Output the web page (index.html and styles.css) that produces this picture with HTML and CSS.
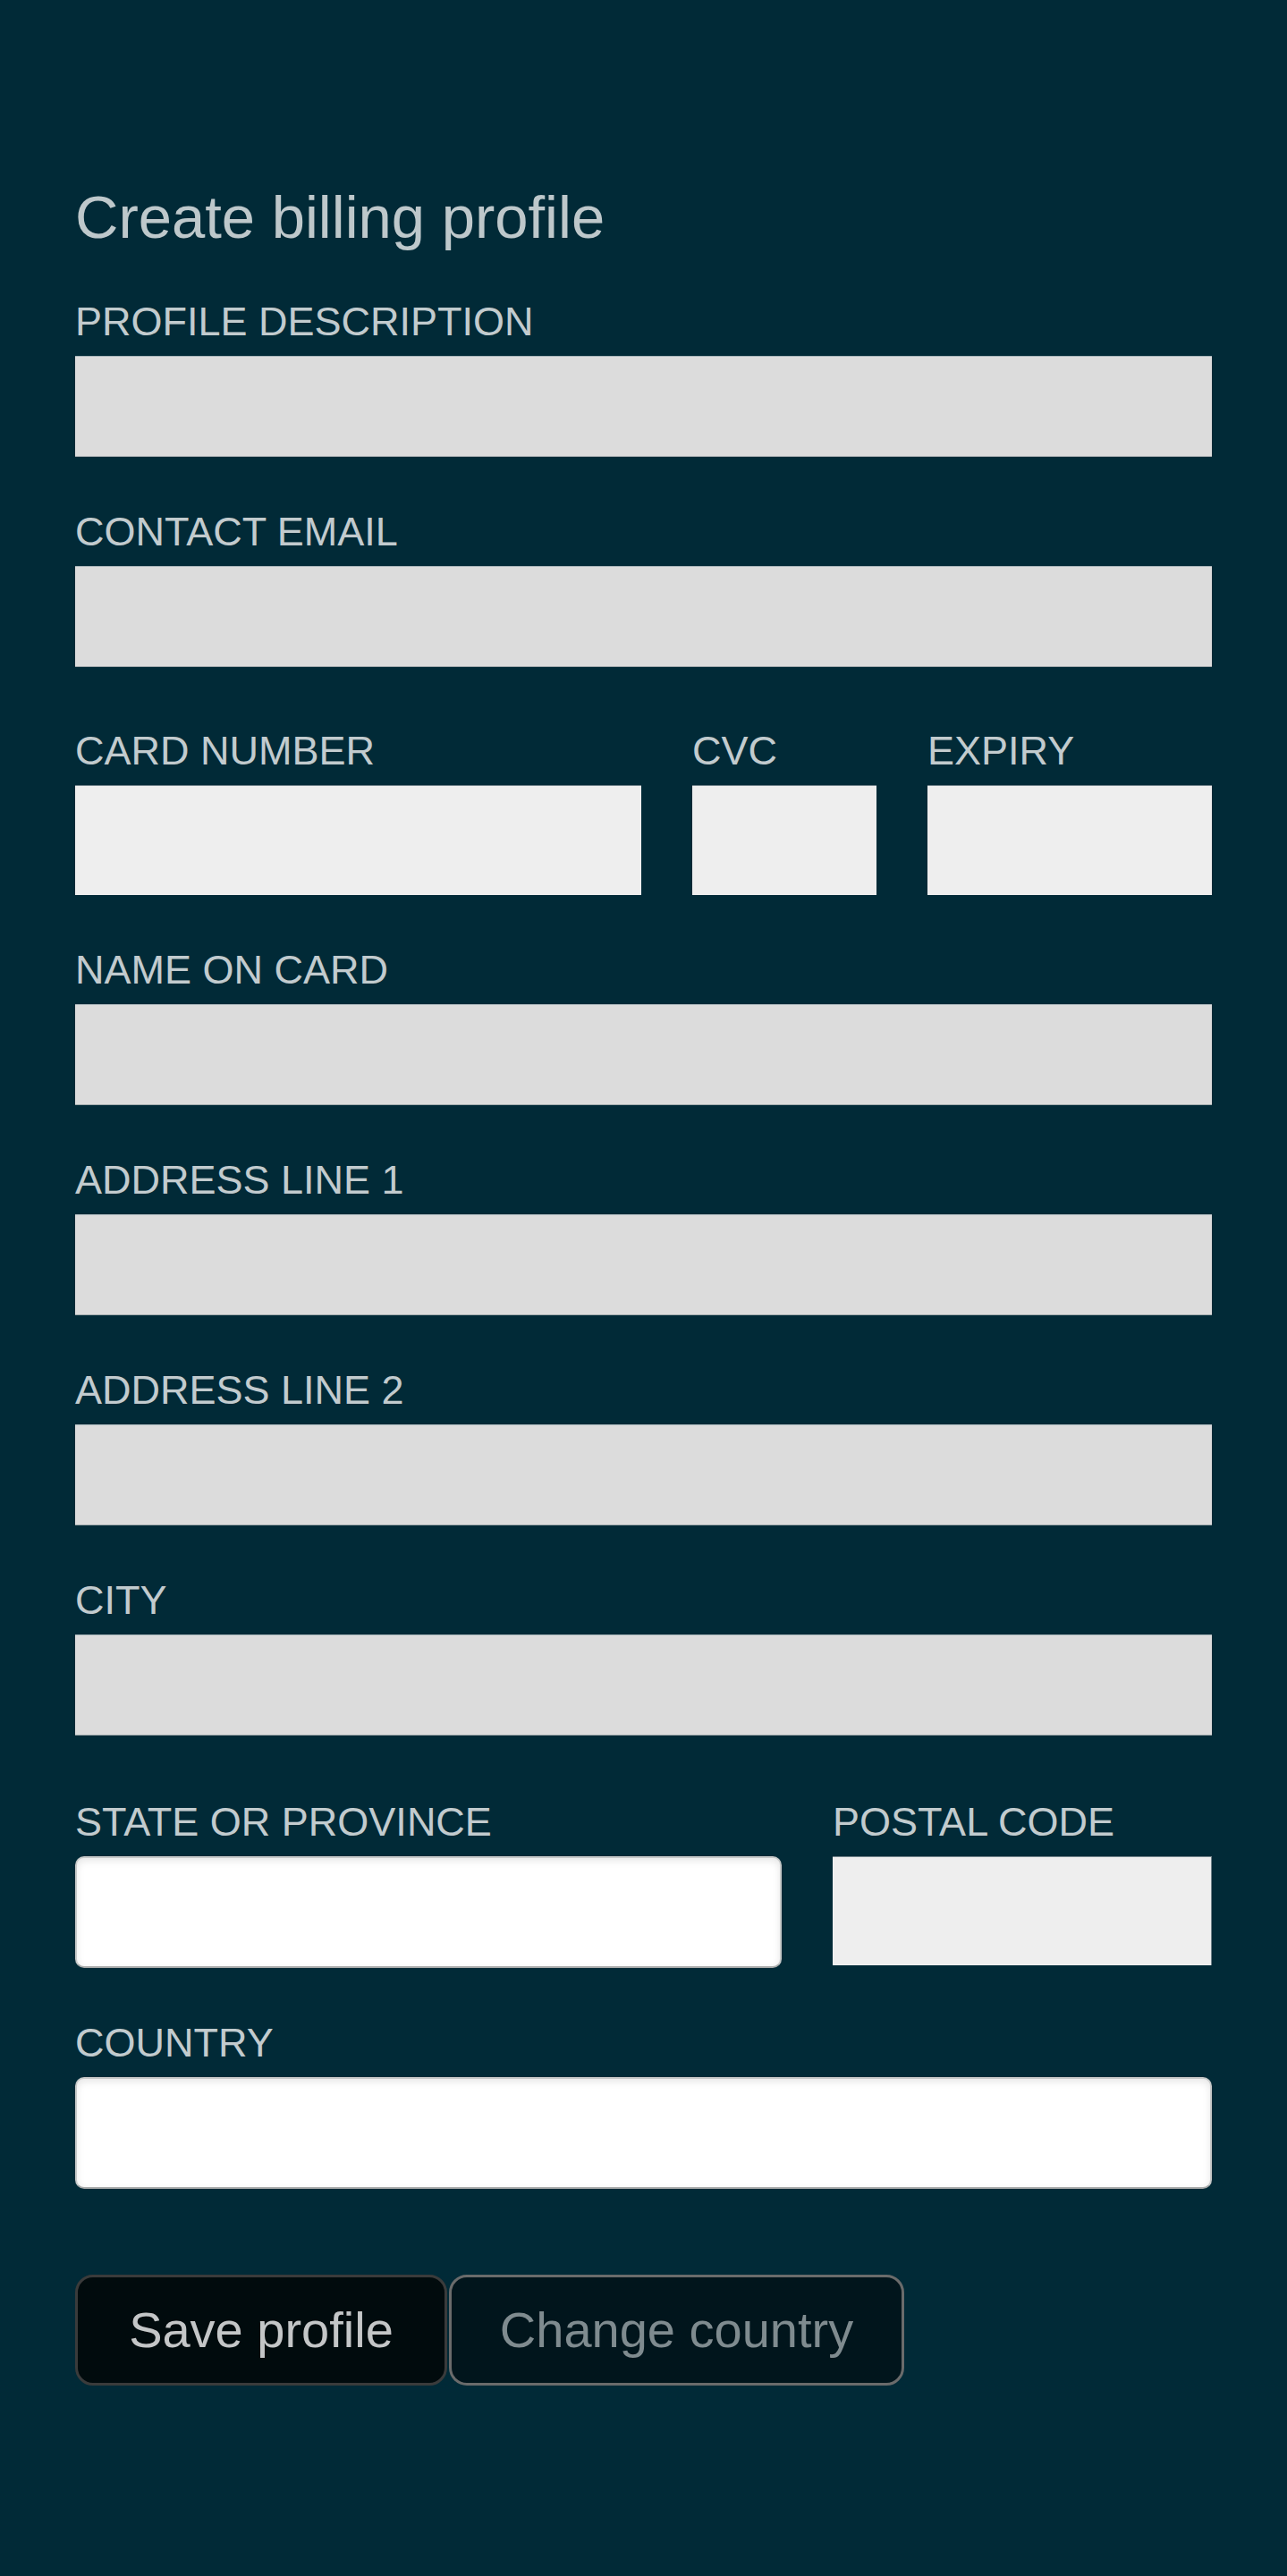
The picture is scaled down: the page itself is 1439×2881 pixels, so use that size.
FILE: index.html
```html
<!DOCTYPE html>
<html lang="en">
<head>
<meta charset="utf-8">
<title>Create billing profile</title>
<link rel="stylesheet" href="styles.css">
</head>
<body>
<main class="page">
  <h1 class="title">Create billing profile</h1>
  <form class="form">
    <div class="field">
      <label class="label" for="desc">PROFILE DESCRIPTION</label>
      <input class="input" id="desc" type="text">
    </div>
    <div class="field">
      <label class="label" for="email">CONTACT EMAIL</label>
      <input class="input" id="email" type="email">
    </div>
    <div class="row row-card">
      <div class="field">
        <label class="label" for="card">CARD NUMBER</label>
        <input class="input input-alt" id="card" type="text">
      </div>
      <div class="field">
        <label class="label" for="cvc">CVC</label>
        <input class="input input-alt" id="cvc" type="text">
      </div>
      <div class="field">
        <label class="label" for="expiry">EXPIRY</label>
        <input class="input input-alt" id="expiry" type="text">
      </div>
    </div>
    <div class="field">
      <label class="label" for="name">NAME ON CARD</label>
      <input class="input" id="name" type="text">
    </div>
    <div class="field">
      <label class="label" for="addr1">ADDRESS LINE 1</label>
      <input class="input" id="addr1" type="text">
    </div>
    <div class="field">
      <label class="label" for="addr2">ADDRESS LINE 2</label>
      <input class="input" id="addr2" type="text">
    </div>
    <div class="field">
      <label class="label" for="city">CITY</label>
      <input class="input" id="city" type="text">
    </div>
    <div class="row row-state">
      <div class="field">
        <label class="label" for="state">STATE OR PROVINCE</label>
        <input class="input input-select" id="state" type="text">
      </div>
      <div class="field">
        <label class="label" for="postal">POSTAL CODE</label>
        <input class="input input-alt input-postal" id="postal" type="text">
      </div>
    </div>
    <div class="field">
      <label class="label" for="country">COUNTRY</label>
      <input class="input input-select" id="country" type="text">
    </div>
    <div class="actions">
      <button class="btn btn-primary" type="button">Save profile</button>
      <button class="btn btn-secondary" type="button">Change country</button>
    </div>
  </form>
</main>
</body>
</html>
```
FILE: styles.css
```css
html {
  background: #012a37;
}
body {
  margin: 0;
  background: #012a37;
  font-family: "Liberation Sans", Arial, sans-serif;
  min-height: 2881px;
}
.page {
  padding: 204px 84px 0;
}
.title {
  margin: 0 0 54px;
  font-size: 67px;
  line-height: 77px;
  font-weight: 400;
  color: #bec8cb;
}
.form {
  display: flex;
  flex-direction: column;
}
.field {
  display: flex;
  flex-direction: column;
  margin-bottom: 59px;
  min-width: 0;
}
.label {
  font-size: 45px;
  line-height: 50px;
  color: #c2cbce;
  margin-bottom: 13px;
  white-space: nowrap;
}
.input {
  box-sizing: border-box;
  width: 100%;
  height: 113px;
  margin: 0;
  padding: 0 16px;
  border: none;
  border-top: 1px solid #a9b6ba;
  border-bottom: 1px solid #a2aaad;
  background: #dcdcdc;
  font: inherit;
  font-size: 44px;
  outline: none;
}
.input-alt {
  height: 123px;
  background: #eeeeee;
  border-top: 1px solid #6e8189;
  border-bottom: none;
}
.input-postal {
  height: 122px;
  border-right: 1px solid #6e8189;
}
.input-select {
  height: 125px;
  background: #ffffff;
  border: 2px solid #c7c9c9;
  border-bottom-color: #a9abab;
  border-radius: 10px;
  box-shadow: inset 0 3px 8px rgba(0, 0, 0, 0.10);
}
.row {
  display: grid;
  column-gap: 57px;
  margin-top: 10px;
}
.row-card {
  grid-template-columns: 633fr 206fr 318fr;
}
.row-state {
  margin-top: 13px;
  grid-template-columns: 788fr 423fr;
  align-items: start;
}
.actions {
  display: flex;
  gap: 2px;
  margin-top: 37px;
}
.btn {
  box-sizing: border-box;
  height: 124px;
  border-radius: 20px;
  border: 3px solid #3a3b3b;
  font-family: "Liberation Sans", Arial, sans-serif;
  font-size: 56px;
  line-height: 64px;
  cursor: pointer;
}
.btn-primary {
  width: 416px;
  background: #010b0d;
  color: #c4c6c7;
}
.btn-secondary {
  width: 509px;
  background: #01151c;
  border-color: #6a6b6b;
  color: #7f8b8f;
}
```
